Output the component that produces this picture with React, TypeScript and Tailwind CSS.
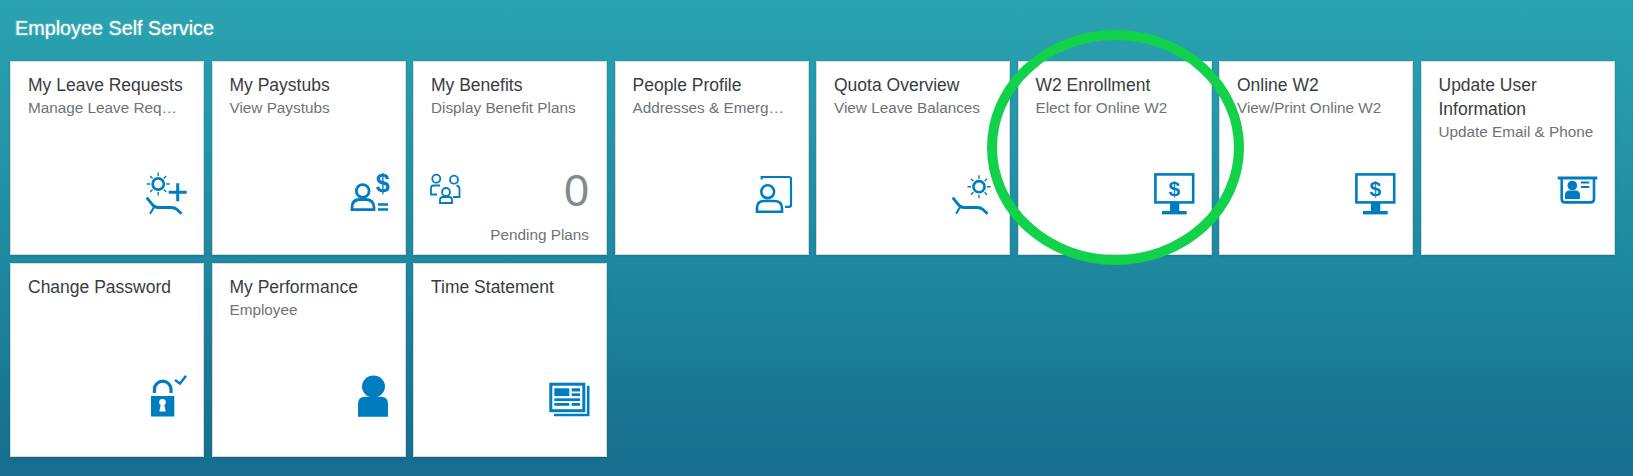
import type { ReactNode } from "react";

const BLUE = "#007cc0";
const FONT = "font-['Liberation_Sans',Arial,sans-serif]";

function IconBox({ children }: { children: ReactNode }) {
  return (
    <svg width="44" height="44" viewBox="0 0 44 44" fill="none" stroke={BLUE} className="block overflow-visible">
      {children}
    </svg>
  );
}

function Sun({ cx, cy }: { cx: number; cy: number }) {
  return (
    <g>
      <circle cx={cx} cy={cy} r="5.6" strokeWidth="2.6" />
      <path
        d={`M${cx} ${cy - 11.5}v3.5M${cx} ${cy + 8}v3.5M${cx - 11.5} ${cy}h3.5M${cx + 8} ${cy}h3.5M${cx - 8} ${cy - 8}l2.4 2.4M${cx + 5.6} ${cy + 5.6}l2.4 2.4M${cx + 8} ${cy - 8}l-2.4 2.4M${cx - 5.6} ${cy + 5.6}l-2.4 2.4`}
        strokeWidth="1.4"
      />
    </g>
  );
}

function Lounger() {
  return (
    <g strokeWidth="2.8">
      <path d="M3.7 26.7 L9 33 Q11 36.5 15 36.5 H28 Q32 36.5 34 38.5 L38.5 42.8" />
      <path d="M11 36 Q9.5 39 7 42.8" strokeWidth="2" />
    </g>
  );
}

function LeaveAddIcon() {
  return (
    <IconBox>
      <Sun cx={15.2} cy={13} />
      <path d="M34.7 12.3v18M25.7 21.3h18" strokeWidth="3" />
      <Lounger />
    </IconBox>
  );
}

function QuotaIcon() {
  return (
    <IconBox>
      <Sun cx={30} cy={15.7} />
      <Lounger />
    </IconBox>
  );
}

function PaystubIcon() {
  return (
    <IconBox>
      <circle cx="17.7" cy="20" r="6.4" strokeWidth="2.8" />
      <path d="M7 38.6 V36.5 Q7 28.5 15 28.5 H20.5 Q29 28.5 29 36.5 V38.6 Z" strokeWidth="2.8" />
      <path d="M33 33.5h10M33 38.5h10" strokeWidth="2.6" />
      <text x="37.6" y="20.5" textAnchor="middle" fontSize="25" fontWeight="700" fontFamily="'Liberation Sans',Arial,sans-serif" fill={BLUE} stroke="none">
        $
      </text>
    </IconBox>
  );
}

function BenefitsIcon() {
  return (
    <svg width="34" height="33" viewBox="0 0 34 33" fill="none" stroke={BLUE} strokeWidth="1.8" className="-ml-[2px] block">
      <circle cx="7.3" cy="6.7" r="4" />
      <circle cx="25" cy="7.7" r="4" />
      <circle cx="17" cy="20" r="4" />
      <path d="M11 13.5 H4.5 Q2 13.5 2 16 V22.5 H8" />
      <path d="M27.5 13.5 Q30.5 14 30.5 17 V25 H24" />
      <path d="M11 31 V28 Q11 25 14 25 H20 Q23 25 23 28 V31 Z" />
    </svg>
  );
}

function ProfileIcon() {
  return (
    <IconBox>
      <circle cx="19.7" cy="20.7" r="6.4" strokeWidth="2.6" />
      <path d="M9 40.7 V37 Q9 30 16 30 H26 Q34 30 34 37 V40.7 Z" strokeWidth="2.6" />
      <path d="M13.7 8.5 V6 H41 Q43 6 43 8 V34 Q43 35.8 41 35.8 H37" strokeWidth="2.2" />
    </IconBox>
  );
}

function MonitorIcon() {
  return (
    <IconBox>
      <rect x="4.4" y="3.4" width="37.8" height="28" strokeWidth="2.6" />
      <rect x="19" y="32" width="9.3" height="8" fill={BLUE} stroke="none" />
      <rect x="11" y="40" width="24.7" height="3.4" fill={BLUE} stroke="none" />
      <text x="23.4" y="24.5" textAnchor="middle" fontSize="21" fontWeight="700" fontFamily="'Liberation Sans',Arial,sans-serif" fill={BLUE} stroke="none">
        $
      </text>
    </IconBox>
  );
}

function UserInfoIcon() {
  return (
    <IconBox>
      <path d="M3.7 7h39.6" strokeWidth="2.8" />
      <path d="M7.7 7 V28 Q7.7 31.4 11 31.4 H36.5 Q40 31.4 40 28 V7" strokeWidth="2.6" />
      <circle cx="18.3" cy="14.5" r="4.8" fill={BLUE} stroke="none" />
      <path d="M11 28 V24 Q11 19.5 15.5 19.5 H21.5 Q26 19.5 26 24 V28 Z" fill={BLUE} stroke="none" />
      <path d="M27 11.5h8.3M27 16h8.3" strokeWidth="2.2" />
    </IconBox>
  );
}

function LockIcon() {
  return (
    <IconBox>
      <path d="M11.4 20 V16.5 A8.3 8.3 0 0 1 28 16.5 V20" strokeWidth="3.2" />
      <rect x="8" y="23" width="23.3" height="20.5" fill={BLUE} stroke="none" />
      <circle cx="19.5" cy="29.2" r="3.3" fill="#fff" stroke="none" />
      <path d="M18 30.5 L16.3 38.5 H22.7 L21 30.5 Z" fill="#fff" stroke="none" />
      <path d="M32 7 L37 10.5 L43 2.8" strokeWidth="2.4" />
    </IconBox>
  );
}

function PersonIcon() {
  return (
    <IconBox>
      <ellipse cx="28.5" cy="13.5" rx="11.5" ry="11" fill={BLUE} stroke="none" />
      <path d="M13 43.7 V31 Q13 23.7 20 23.7 H36 Q43 23.7 43 31 V43.7 Z" fill={BLUE} stroke="none" />
    </IconBox>
  );
}

function NewsIcon() {
  return (
    <IconBox>
      <rect x="4.8" y="11.2" width="33" height="26.5" strokeWidth="3" />
      <path d="M42.2 12.7 V42 H8" strokeWidth="2.6" />
      <g fill={BLUE} stroke="none">
        <rect x="8.3" y="15.3" width="15" height="7.8" />
        <rect x="25.7" y="15.3" width="8.3" height="3.2" />
        <rect x="25.7" y="20.3" width="8.3" height="2.8" />
        <rect x="8.3" y="25.3" width="25.7" height="2.8" />
        <rect x="8.3" y="30" width="15" height="2.8" />
        <rect x="25.7" y="30" width="8.3" height="2.8" />
      </g>
    </IconBox>
  );
}

interface TileData {
  title: string;
  subtitle?: string;
  icon?: ReactNode;
  body?: ReactNode;
}

const tiles: TileData[] = [
  { title: "My Leave Requests", subtitle: "Manage Leave Req…", icon: <LeaveAddIcon /> },
  { title: "My Paystubs", subtitle: "View Paystubs", icon: <PaystubIcon /> },
  {
    title: "My Benefits",
    subtitle: "Display Benefit Plans",
    body: (
      <div className="mt-auto pr-[1px] pb-[9px]">
        <div className="flex items-start justify-between">
          <BenefitsIcon />
          <span className="-mt-[4px] text-[45px] leading-[45px] text-[#7f8c8d]">0</span>
        </div>
        <div className="mt-[12px] text-right text-[15.3px] leading-5 text-[#6f7275]">Pending Plans</div>
      </div>
    ),
  },
  { title: "People Profile", subtitle: "Addresses & Emerg…", icon: <ProfileIcon /> },
  { title: "Quota Overview", subtitle: "View Leave Balances", icon: <QuotaIcon /> },
  { title: "W2 Enrollment", subtitle: "Elect for Online W2", icon: <MonitorIcon /> },
  { title: "Online W2", subtitle: "View/Print Online W2", icon: <MonitorIcon /> },
  { title: "Update User Information", subtitle: "Update Email & Phone", icon: <UserInfoIcon /> },
  { title: "Change Password", icon: <LockIcon /> },
  { title: "My Performance", subtitle: "Employee", icon: <PersonIcon /> },
  { title: "Time Statement", icon: <NewsIcon /> },
];

function Tile({ title, subtitle, icon, body }: TileData) {
  return (
    <div className="flex h-[194px] flex-col border border-[#d9dcde] bg-white pt-[11px] pr-[16px] pl-[17px] shadow-[0_1px_2px_rgba(0,0,0,0.15)]">
      <div className="text-[17.5px] leading-[24px] text-[#3a3d40]">{title}</div>
      {subtitle && <div className="pt-[1px] text-[15.3px] leading-5 text-[#6f7275]">{subtitle}</div>}
      {body}
      {icon && <div className="mt-auto mb-[39px] flex justify-end">{icon}</div>}
    </div>
  );
}

export default function App() {
  return (
    <div className={`relative h-[476px] w-[1633px] overflow-hidden bg-linear-to-b from-[#2aa3b0] via-[#1f8ca2] to-[#166d8d] ${FONT}`}>
      <header className="flex h-[61px] items-start pt-[16px] pl-[15px] text-[19.8px] leading-6 text-white [text-shadow:0_0_2px_rgba(255,255,255,0.6)]">
        Employee Self Service
      </header>
      <div className="grid grid-cols-[repeat(8,194px)] gap-x-[7.5px] gap-y-[8px] pl-[10px]">
        {tiles.map((t) => (
          <Tile key={t.title} {...t} />
        ))}
      </div>
      {/* green marker circle drawn over the screenshot */}
      <svg width="257" height="235" viewBox="0 0 257 235" fill="none" className="absolute top-[30px] left-[987px]">
        <ellipse cx="128.5" cy="117.5" rx="123.5" ry="112.5" stroke="#12d14b" strokeWidth="10" />
      </svg>
    </div>
  );
}
